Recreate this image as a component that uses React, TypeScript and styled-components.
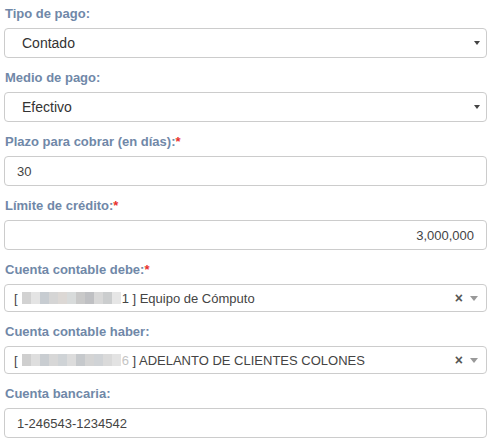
import React from 'react';
import styled, { createGlobalStyle } from 'styled-components';

const GlobalStyle = createGlobalStyle`
  html, body {
    margin: 0;
    padding: 0;
    background: #fff;
  }
  body {
    font-family: "Liberation Sans", Arial, sans-serif;
  }
`;

const Form = styled.div`
  padding: 4px 3px 0 4px;
  width: 490px;
  box-sizing: border-box;
`;

const Group = styled.div`
  margin-bottom: 10px;
`;

const Label = styled.div`
  font-size: 13px;
  font-weight: bold;
  line-height: 20px;
  height: 20px;
  margin-bottom: 4px;
  padding-left: 1px;
  color: #7088a8;
`;

const Required = styled.span`
  color: #e8322d;
`;

const Box = styled.div<{ $h?: number; $align?: 'left' | 'right' }>`
  box-sizing: border-box;
  height: ${({ $h }) => $h ?? 30}px;
  border: 1px solid #cccccc;
  border-radius: 4px;
  background: #fff;
  display: flex;
  align-items: center;
  justify-content: ${({ $align }) => ($align === 'right' ? 'flex-end' : 'flex-start')};
  font-size: 13px;
  color: #444;
  white-space: nowrap;
  overflow: hidden;
`;

const InputText = styled.span`
  padding: 0 12px;
`;

const SelectText = styled.span`
  flex: 1;
  padding-left: 17px;
  font-size: 14px;
  color: #333;
`;

const Caret = styled.span<{ $color: string; $w: number }>`
  width: 0;
  height: 0;
  border-left: ${({ $w }) => $w}px solid transparent;
  border-right: ${({ $w }) => $w}px solid transparent;
  border-top: ${({ $w }) => $w + 1}px solid ${({ $color }) => $color};
`;

const NativeCaret = styled.span`
  display: flex;
  padding-right: 6px;
`;

const Select2Text = styled.span`
  flex: 1;
  padding-left: 9px;
  display: flex;
  align-items: center;
  color: #444;
`;

const Redacted = styled.span`
  display: inline-flex;
  height: 12px;
  margin: 0 1px 0 4px;
`;

const Pixel = styled.span<{ $c: string; $w: number }>`
  display: block;
  width: ${({ $w }) => $w}px;
  height: 12px;
  background: ${({ $c }) => $c};
`;

const Faded = styled.span`
  color: #c4c4c4;
`;

const Clear = styled.span`
  font-size: 14px;
  font-weight: bold;
  color: #555;
  margin-right: 7px;
  line-height: 1;
`;

const Select2Arrow = styled.span`
  display: flex;
  padding-right: 8px;
`;

const debeBlocks = ['#d2d2d2', '#e4e4e4', '#c7ccd1', '#d5d5d5', '#dcd8d5', '#d8dbdb', '#c9c9c9', '#bfc0c3', '#d8d8d8', '#cbcdce', '#e6e6e6'];
const haberBlocks = ['#cfcfcf', '#dedede', '#c9cdd1', '#d7d7d7', '#cfd3d6', '#dcdcdc', '#c6c9cc', '#d4d4d4', '#d0d3d6', '#dadada', '#e3e3e3'];

const NativeSelect: React.FC<{ value: string }> = ({ value }) => (
  <Box>
    <SelectText>{value}</SelectText>
    <NativeCaret>
      <Caret $color="#444" $w={3} />
    </NativeCaret>
  </Box>
);

const Select2: React.FC<{ blocks: string[]; tail: React.ReactNode; rest: string }> = ({ blocks, tail, rest }) => (
  <Box $h={28}>
    <Select2Text>
      [
      <Redacted>
        {blocks.map((c, i) => (
          <Pixel key={i} $c={c} $w={9} />
        ))}
      </Redacted>
      {tail}&nbsp;] {rest}
    </Select2Text>
    <Clear>×</Clear>
    <Select2Arrow>
      <Caret $color="#999" $w={4} />
    </Select2Arrow>
  </Box>
);

export default function App() {
  return (
    <>
      <GlobalStyle />
      <Form>
        <Group>
          <Label>Tipo de pago:</Label>
          <NativeSelect value="Contado" />
        </Group>
        <Group>
          <Label>Medio de pago:</Label>
          <NativeSelect value="Efectivo" />
        </Group>
        <Group>
          <Label>
            Plazo para cobrar (en días):<Required>*</Required>
          </Label>
          <Box>
            <InputText>30</InputText>
          </Box>
        </Group>
        <Group>
          <Label>
            Límite de crédito:<Required>*</Required>
          </Label>
          <Box $align="right">
            <InputText>3,000,000</InputText>
          </Box>
        </Group>
        <Group>
          <Label>
            Cuenta contable debe:<Required>*</Required>
          </Label>
          <Select2 blocks={debeBlocks} tail="1" rest="Equipo de Cómputo" />
        </Group>
        <Group>
          <Label>Cuenta contable haber:</Label>
          <Select2 blocks={haberBlocks} tail={<Faded>6</Faded>} rest="ADELANTO DE CLIENTES COLONES" />
        </Group>
        <Group>
          <Label>Cuenta bancaria:</Label>
          <Box>
            <InputText>1-246543-1234542</InputText>
          </Box>
        </Group>
      </Form>
    </>
  );
}
